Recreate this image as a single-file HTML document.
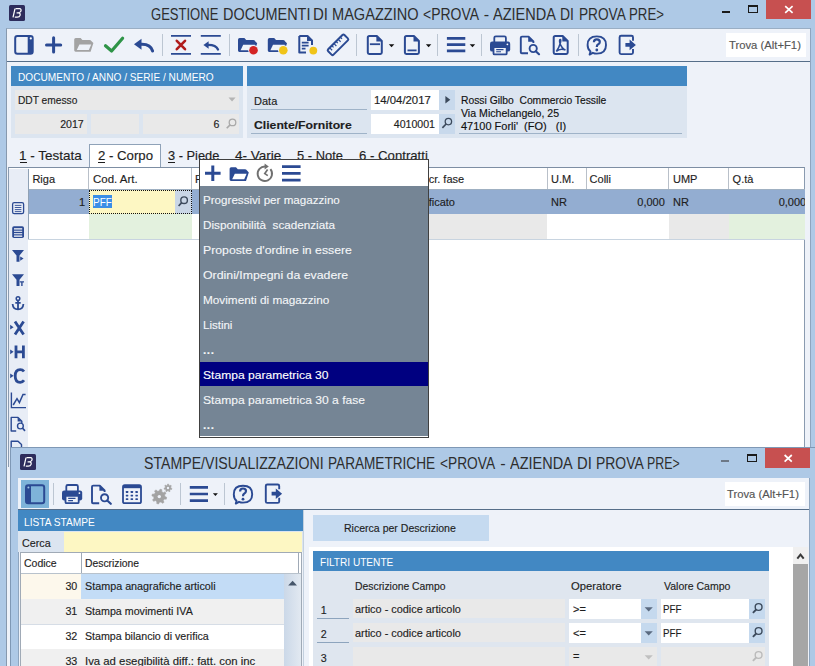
<!DOCTYPE html>
<html><head><meta charset="utf-8">
<style>
*{margin:0;padding:0;box-sizing:border-box}
html,body{width:815px;height:666px;overflow:hidden}
body{position:relative;background:#aec9e6;font-family:"Liberation Sans",sans-serif;font-size:11px;color:#1e1e1e}
.a{position:absolute}
.t{position:absolute;white-space:pre;line-height:1;-webkit-text-stroke:0.15px currentColor}
.s{position:absolute;overflow:visible}
</style></head><body>
<div class="a" style="left:9px;top:5px;width:16px;height:15.6px;background:#2d2c5c;border-radius:1.5px"></div>
<svg class="s" style="left:0px;top:0px" width="815" height="666" viewBox="0 0 815 666"><path d="M13 17.4 L15 8.6 M15.6 8.6 H19.6 Q21.4 8.8 21 10.8 Q20.5 12.8 16.6 12.9 H18.6 Q20.6 13.2 20.1 15.2 Q19.5 17.2 17.2 17.2 H14.8" fill="none" stroke="#fff" stroke-width="1.25"/></svg>
<div class="t" style="left:150.70px;top:5.99px;font-size:16.2px;transform:scaleX(0.8050);transform-origin:0 0;color:#2d2d2d;-webkit-text-stroke:0">GESTIONE</div>
<div class="t" style="left:222.90px;top:5.99px;font-size:16.2px;transform:scaleX(0.8921);transform-origin:0 0;color:#2d2d2d;-webkit-text-stroke:0">DOCUMENTI</div>
<div class="t" style="left:313.10px;top:5.99px;font-size:16.2px;transform:scaleX(0.9267);transform-origin:0 0;color:#2d2d2d;-webkit-text-stroke:0">DI</div>
<div class="t" style="left:331.80px;top:5.99px;font-size:16.2px;transform:scaleX(0.8995);transform-origin:0 0;color:#2d2d2d;-webkit-text-stroke:0">MAGAZZINO</div>
<div class="t" style="left:423.10px;top:5.99px;font-size:16.2px;transform:scaleX(0.8626);transform-origin:0 0;color:#2d2d2d;-webkit-text-stroke:0">&lt;PROVA</div>
<div class="t" style="left:483.80px;top:5.99px;font-size:16.2px;color:#2d2d2d;-webkit-text-stroke:0">-</div>
<div class="t" style="left:492.70px;top:5.99px;font-size:16.2px;transform:scaleX(0.8973);transform-origin:0 0;color:#2d2d2d;-webkit-text-stroke:0">AZIENDA</div>
<div class="t" style="left:560.40px;top:5.99px;font-size:16.2px;transform:scaleX(0.8596);transform-origin:0 0;color:#2d2d2d;-webkit-text-stroke:0">DI</div>
<div class="t" style="left:578.50px;top:5.99px;font-size:16.2px;transform:scaleX(0.8434);transform-origin:0 0;color:#2d2d2d;-webkit-text-stroke:0">PROVA</div>
<div class="t" style="left:628.60px;top:5.99px;font-size:16.2px;transform:scaleX(0.8178);transform-origin:0 0;color:#2d2d2d;-webkit-text-stroke:0">PRE&gt;</div>
<div class="a" style="left:722px;top:10.5px;width:8px;height:2.5px;background:#1a1a1a;"></div>
<div class="a" style="left:748px;top:5px;width:10px;height:8px;background:transparent;border:1.2px solid #1a1a1a;border-top-width:2px"></div>
<div class="a" style="left:766px;top:0px;width:45px;height:19px;background:#c75050;"></div>
<svg class="s" style="left:0px;top:0px" width="815" height="666" viewBox="0 0 815 666"><path d="M785.2 6.2 L792.6 12.9 M792.6 6.2 L785.2 12.9" stroke="#fff" stroke-width="1.7"/></svg>
<div class="a" style="left:6px;top:28px;width:804px;height:640px;background:#eef2f9;border-left:1px solid #8799ae;border-top:1px solid #9aaec4"></div>
<div class="a" style="left:7px;top:29px;width:803px;height:33px;background:#eef2f9;border-bottom:1px solid #566e89"></div>
<div class="a" style="left:810px;top:28px;width:1px;height:640px;background:#8ea5bf;"></div>
<div class="a" style="left:726px;top:33px;width:80px;height:24px;background:#fff;"></div>
<div class="t" style="left:729.00px;top:40.00px;font-size:11.1px;transform:scaleX(1.0156);transform-origin:0 0;color:#555">Trova (Alt+F1)</div>
<div class="a" style="left:162.0px;top:34px;width:1px;height:22px;background:#bcc6d2;"></div>
<div class="a" style="left:228.8px;top:34px;width:1px;height:22px;background:#bcc6d2;"></div>
<div class="a" style="left:356.0px;top:34px;width:1px;height:22px;background:#bcc6d2;"></div>
<div class="a" style="left:437.2px;top:34px;width:1px;height:22px;background:#bcc6d2;"></div>
<div class="a" style="left:480.7px;top:34px;width:1px;height:22px;background:#bcc6d2;"></div>
<div class="a" style="left:577.7px;top:34px;width:1px;height:22px;background:#bcc6d2;"></div>
<svg class="s" style="left:0px;top:0px" width="815" height="666" viewBox="0 0 815 666"><rect x="15.2" y="36" width="17.5" height="17.8" rx="2.2" fill="none" stroke="#2b4a93" stroke-width="2"/><rect x="27.7" y="36" width="5" height="17.8" fill="#2b4a93"/><circle cx="30.8" cy="38.4" r="1.1" fill="#fff"/><path d="M53.6 37.8 V52 M46.5 44.9 H60.7" stroke="#2b4a93" stroke-width="3" stroke-linecap="round"/><path d="M74.2 39.5 Q74.2 37.9 75.8 37.9 H80.60000000000001 L82.4 39.9 H89.4 Q90.80000000000001 39.9 91.6 41.3 L93.4 43.1 L90.6 51.7 H75.60000000000001 Q74.2 51.7 74.2 50.3 Z" fill="#a3a3a3"/><path d="M79.4 44.5 H91.2 L88.8 50.0 H76.8 Z" fill="#eef2f9"/><path d="M105.5 45.8 L111.6 51 L122.6 38.3" fill="none" stroke="#2e9447" stroke-width="3.2" stroke-linecap="round" stroke-linejoin="round"/><path d="M134 44.3 L141.5 38.8 L141.5 49.8 Z" fill="#2b4a93"/><path d="M140 44.3 Q150.5 43.5 152.6 51" fill="none" stroke="#2b4a93" stroke-width="3" stroke-linecap="round"/><path d="M171 35.8 H191 M171 53.9 H191" stroke="#2b4a93" stroke-width="1.7"/><path d="M176.8 40.8 L185 49.2 M185 40.8 L176.8 49.2" stroke="#b01c1c" stroke-width="2.6" stroke-linecap="round"/><path d="M200.8 35.8 H220.8 M200.8 53.9 H220.8" stroke="#2b4a93" stroke-width="1.7"/><path d="M203.4 45 L208.6 41.2 L208.6 48.8 Z" fill="#2b4a93"/><path d="M207 45 Q215.8 44.6 218 49.5" fill="none" stroke="#2b4a93" stroke-width="2.3" stroke-linecap="round"/><path d="M238 39.7 Q238 38.1 239.6 38.1 H244.4 L246.2 40.1 H253.2 Q254.6 40.1 255.4 41.5 L257.2 43.300000000000004 L254.4 51.900000000000006 H239.4 Q238 51.900000000000006 238 50.5 Z" fill="#2b4a93"/><path d="M243.2 44.7 H255 L252.6 50.2 H240.6 Z" fill="#eef2f9"/><circle cx="253.5" cy="50.3" r="5.2" fill="#eef2f9"/><circle cx="253.5" cy="50.3" r="4.3" fill="#d42424"/><path d="M267.8 39.7 Q267.8 38.1 269.40000000000003 38.1 H274.2 L276.0 40.1 H283.0 Q284.40000000000003 40.1 285.2 41.5 L287.0 43.300000000000004 L284.2 51.900000000000006 H269.2 Q267.8 51.900000000000006 267.8 50.5 Z" fill="#2b4a93"/><path d="M273.0 44.7 H284.8 L282.40000000000003 50.2 H270.40000000000003 Z" fill="#eef2f9"/><circle cx="283.3" cy="50.3" r="5.2" fill="#eef2f9"/><circle cx="283.3" cy="50.3" r="4.3" fill="#f0c419"/><path d="M299.3 36 H307.5 L312 40.5 V45 M299.3 36 V52.6 H306" fill="none" stroke="#2b4a93" stroke-width="2" stroke-linejoin="round"/><path d="M307 36 V41 H312 Z" fill="#2b4a93"/><path d="M301.8 42.6 H308.6 M301.8 45.6 H308.6 M301.8 48.6 H305.5" stroke="#2b4a93" stroke-width="1.6"/><circle cx="313.3" cy="50.6" r="4.8" fill="#eef2f9"/><circle cx="313.3" cy="50.6" r="3.9" fill="#f0c419"/><g transform="rotate(-45 338 44.8)"><rect x="326.5" y="41" width="23" height="7.6" rx="1.4" fill="none" stroke="#2b4a93" stroke-width="2"/><path d="M330 41.5 V44.5 M333 41.5 V43.5 M336 41.5 V44.5 M339 41.5 V43.5 M342 41.5 V44.5 M345 41.5 V43.5" stroke="#2b4a93" stroke-width="1.2"/></g><path d="M369.40000000000003 36 H376.8 L381.8 41 V52.6 Q381.8 54 380.40000000000003 54 H369.2 Q367.8 54 367.8 52.6 V37.6 Q367.8 36 369.40000000000003 36 Z" fill="none" stroke="#2b4a93" stroke-width="2" stroke-linejoin="round"/><path d="M376.40000000000003 36 V41.4 H381.8 Z" fill="#2b4a93"/><path d="M369.9 44.2 H380" stroke="#2b4a93" stroke-width="1.8"/><path d="M388.8 44.2 H394.3 L391.55 47.2 Z" fill="#111"/><path d="M406.5 36 H413.9 L418.9 41 V52.6 Q418.9 54 417.5 54 H406.29999999999995 Q404.9 54 404.9 52.6 V37.6 Q404.9 36 406.5 36 Z" fill="none" stroke="#2b4a93" stroke-width="2" stroke-linejoin="round"/><path d="M413.5 36 V41.4 H418.9 Z" fill="#2b4a93"/><path d="M407.5 50.4 H416.6" stroke="#2b4a93" stroke-width="1.8"/><path d="M425.9 44.2 H431.3 L428.6 47.2 Z" fill="#111"/><path d="M446.9 38.4 H465.3 M446.9 44.7 H465.3 M446.9 50.8 H465.3" stroke="#2b4a93" stroke-width="2.7"/><path d="M469.7 44.2 H475.2 L472.45 47.2 Z" fill="#111"/><rect x="494.3" y="36.3" width="11.6" height="7" rx="1.5" fill="none" stroke="#2b4a93" stroke-width="1.8"/><rect x="490" y="41.6" width="20.2" height="10" rx="2.2" fill="#2b4a93"/><rect x="493.5" y="47" width="13.2" height="7.4" rx="1" fill="#eef2f9" stroke="#2b4a93" stroke-width="1.8"/><path d="M496.2 49.6 H503.5 M496.2 51.8 H501" stroke="#2b4a93" stroke-width="1.1"/><circle cx="507.4" cy="44.3" r="0.9" fill="#fff"/><path d="M528 53.2 H521.8 Q520.8 53.2 520.8 52.2 V37.8 Q520.8 36.6 522 36.6 H528.6 L533.4 41.4 V43" fill="none" stroke="#2b4a93" stroke-width="1.9" stroke-linejoin="round"/><path d="M528.2 36.6 V41.8 H533.4 Z" fill="#2b4a93"/><circle cx="533.2" cy="48.5" r="3.6" fill="none" stroke="#2b4a93" stroke-width="1.9"/><path d="M535.8 51.2 L539 54.2" stroke="#2b4a93" stroke-width="2.2" stroke-linecap="round"/><path d="M555.3000000000001 36 H562.7 L567.7 41 V52.6 Q567.7 54 566.3000000000001 54 H555.1 Q553.7 54 553.7 52.6 V37.6 Q553.7 36 555.3000000000001 36 Z" fill="none" stroke="#2b4a93" stroke-width="2" stroke-linejoin="round"/><path d="M562.3000000000001 36 V41.4 H567.7 Z" fill="#2b4a93"/><path d="M556.3 51.5 Q558.8 48.5 560.5 42.5 Q561.2 39.5 560.2 39.6 Q559 39.8 560 43.5 Q561.8 48.5 565.5 50 M556.3 51.5 Q560 47.8 565.5 50" fill="none" stroke="#2b4a93" stroke-width="1.5" stroke-linejoin="round"/><path d="M590.5 51.6 Q587.6 49.2 587.6 45 Q587.6 36.4 596.8 36.4 Q606 36.4 606 45 Q606 53.6 596.8 53.6 Q594.6 53.6 592.8 52.8 L589.6 54.6 Z" fill="none" stroke="#2b4a93" stroke-width="1.9" stroke-linejoin="round"/><path d="M593.9 42.2 Q593.9 39.3 596.8 39.3 Q599.8 39.3 599.8 41.9 Q599.8 43.6 597.9 44.5 Q596.8 45 596.8 47" fill="none" stroke="#2b4a93" stroke-width="2.2"/><circle cx="596.8" cy="50" r="1.4" fill="#2b4a93"/><path d="M633 40.8 V37.2 Q633 35.7 631.5 35.7 H621.1 Q619.6 35.7 619.6 37.2 V52.6 Q619.6 54.1 621.1 54.1 H631.5 Q633 54.1 633 52.6 V49" fill="none" stroke="#2b4a93" stroke-width="1.9" stroke-linejoin="round"/><path d="M625.4 43 H629.6 V39.6 L635.9 44.9 L629.6 50.2 V46.8 H625.4 Z" fill="#2b4a93"/></svg>
<div class="a" style="left:11px;top:66px;width:232px;height:72px;background:#dce5f0;"></div>
<div class="a" style="left:11px;top:66px;width:232px;height:20px;background:#4288c3;"></div>
<div class="t" style="left:17.50px;top:72.46px;font-size:10.8px;transform:scaleX(0.9379);transform-origin:0 0;color:#fff;-webkit-text-stroke:0">DOCUMENTO / ANNO / SERIE / NUMERO</div>
<div class="a" style="left:15px;top:90px;width:224px;height:20px;background:#e9e9e9;"></div>
<div class="t" style="left:17.50px;top:95.16px;font-size:10.8px;transform:scaleX(0.9443);transform-origin:0 0;">DDT emesso</div>
<svg class="s" style="left:0px;top:0px" width="815" height="666" viewBox="0 0 815 666"><path d="M228.5 97.6 H235.6 L232.05 101.4 Z" fill="#b4b4b4"/></svg>
<div class="a" style="left:15px;top:114px;width:72px;height:20px;background:#e9e9e9;"></div>
<div class="t" style="right:731.30px;top:118.83px;font-size:10.6px;">2017</div>
<div class="a" style="left:91px;top:114px;width:48px;height:20px;background:#e9e9e9;"></div>
<div class="a" style="left:143px;top:114px;width:96px;height:20px;background:#e9e9e9;"></div>
<div class="t" style="right:595.50px;top:118.83px;font-size:10.6px;">6</div>
<svg class="s" style="left:0px;top:0px" width="815" height="666" viewBox="0 0 815 666"><circle cx="232.5" cy="122.4" r="3.3" fill="none" stroke="#a9a9a9" stroke-width="1.3"/><path d="M230.1 124.9 L226.7 128.3" stroke="#a9a9a9" stroke-width="1.6"/></svg>
<div class="a" style="left:247px;top:66px;width:440px;height:72px;background:#dce5f0;"></div>
<div class="a" style="left:247px;top:66px;width:440px;height:20px;background:#4288c3;"></div>
<div class="t" style="left:253.50px;top:95.89px;font-size:11px;transform:scaleX(1.0013);transform-origin:0 0;">Data</div>
<div class="a" style="left:251px;top:109px;width:116px;height:1px;background:#9fb3c8;"></div>
<div class="t" style="left:254.00px;top:119.85px;font-size:11.4px;transform:scaleX(1.0717);transform-origin:0 0;font-weight:bold">Cliente/Fornitore</div>
<div class="a" style="left:251px;top:132.5px;width:116px;height:1px;background:#9fb3c8;"></div>
<div class="a" style="left:371px;top:90px;width:68px;height:20px;background:#fff;"></div>
<div class="t" style="left:374.40px;top:95.39px;font-size:11px;transform:scaleX(1.0317);transform-origin:0 0;">14/04/2017</div>
<div class="a" style="left:439px;top:90px;width:16px;height:20px;background:#c8d9ec;"></div>
<svg class="s" style="left:0px;top:0px" width="815" height="666" viewBox="0 0 815 666"><path d="M445.4 95.9 V103.5 L450.3 99.7 Z" fill="#3c4a5c"/></svg>
<div class="a" style="left:371px;top:114px;width:68px;height:20px;background:#fff;"></div>
<div class="t" style="right:380.00px;top:119.23px;font-size:10.6px;">4010001</div>
<div class="a" style="left:439px;top:114px;width:16px;height:20px;background:#c8d9ec;"></div>
<svg class="s" style="left:0px;top:0px" width="815" height="666" viewBox="0 0 815 666"><circle cx="448.4" cy="121.6" r="3.2" fill="none" stroke="#3c4a5c" stroke-width="1.3"/><path d="M446.1 124 L442.4 127.8" stroke="#3c4a5c" stroke-width="1.7"/></svg>
<div class="t" style="left:461.20px;top:94.89px;font-size:11px;transform:scaleX(0.9371);transform-origin:0 0;color:#111">Rossi Gilbo  Commercio Tessile</div>
<div class="t" style="left:461.20px;top:107.89px;font-size:11px;transform:scaleX(0.9630);transform-origin:0 0;color:#111">Via Michelangelo, 25</div>
<div class="t" style="left:461.20px;top:121.39px;font-size:11px;transform:scaleX(0.9978);transform-origin:0 0;color:#111">47100 Forli&#x27;  (FO)   (I)</div>
<div class="a" style="left:459px;top:133px;width:223px;height:1px;background:#9fb3c8;"></div>
<div class="a" style="left:89px;top:144px;width:72px;height:25px;background:#fff;border:1px solid #8fa2b8;border-bottom:none"></div>
<div class="t" style="left:19.40px;top:150.43px;font-size:12.6px;transform:scaleX(1.0700);transform-origin:0 0;">1 - Testata</div>
<div class="a" style="left:19.6px;top:162px;width:7px;height:1px;background:#1e1e1e;"></div>
<div class="t" style="left:97.70px;top:150.23px;font-size:12.6px;transform:scaleX(1.0487);transform-origin:0 0;">2 - Corpo</div>
<div class="a" style="left:97.9px;top:162px;width:7px;height:1px;background:#1e1e1e;"></div>
<div class="t" style="left:167.70px;top:150.23px;font-size:12.6px;transform:scaleX(1.0183);transform-origin:0 0;">3 - Piede</div>
<div class="a" style="left:168px;top:162px;width:7px;height:1px;background:#1e1e1e;"></div>
<div class="t" style="left:235.40px;top:150.23px;font-size:12.6px;transform:scaleX(1.0744);transform-origin:0 0;">4- Varie</div>
<div class="t" style="left:297.20px;top:150.23px;font-size:12.6px;transform:scaleX(1.0250);transform-origin:0 0;">5 - Note</div>
<div class="t" style="left:359.00px;top:150.23px;font-size:12.6px;transform:scaleX(1.0465);transform-origin:0 0;">6 - Contratti</div>
<div class="a" style="left:8px;top:167px;width:797px;height:300px;background:#fff;border-top:1px solid #7d8ea3;border-left:1px solid #8a9bb0;border-right:1px solid #8a9bb0"></div>
<div class="a" style="left:9px;top:169px;width:19px;height:300px;background:#e8edf6;"></div>
<div class="a" style="left:28px;top:169px;width:1px;height:70px;background:#a9b6c4;"></div>
<div class="a" style="left:88px;top:168px;width:1px;height:21px;background:#b9c0c9;"></div>
<div class="a" style="left:191px;top:168px;width:1px;height:21px;background:#b9c0c9;"></div>
<div class="a" style="left:547px;top:168px;width:1px;height:21px;background:#b9c0c9;"></div>
<div class="a" style="left:586px;top:168px;width:1px;height:21px;background:#b9c0c9;"></div>
<div class="a" style="left:668px;top:168px;width:1px;height:21px;background:#b9c0c9;"></div>
<div class="a" style="left:728px;top:168px;width:1px;height:21px;background:#b9c0c9;"></div>
<div class="a" style="left:28px;top:189px;width:777px;height:1px;background:#9fb0c2;"></div>
<div class="t" style="left:32.40px;top:174.39px;font-size:11px;">Riga</div>
<div class="t" style="left:92.60px;top:174.39px;font-size:11px;transform:scaleX(1.0425);transform-origin:0 0;">Cod. Art.</div>
<div class="t" style="left:195.00px;top:174.39px;font-size:11px;">F</div>
<div class="t" style="left:428.70px;top:174.39px;font-size:11px;">cr. fase</div>
<div class="t" style="left:551.00px;top:174.39px;font-size:11px;">U.M.</div>
<div class="t" style="left:589.60px;top:174.39px;font-size:11px;">Colli</div>
<div class="t" style="left:673.00px;top:174.39px;font-size:11px;">UMP</div>
<div class="t" style="left:732.60px;top:174.39px;font-size:11px;">Q.tà</div>
<div class="a" style="left:28px;top:190px;width:777px;height:24px;background:#93add1;"></div>
<div class="a" style="left:89px;top:190px;width:86px;height:24px;background:#fdf7c3;"></div>
<div class="a" style="left:175px;top:190px;width:16.5px;height:24px;background:#c9d6e6;"></div>
<div class="a" style="left:89px;top:189.8px;width:102.5px;height:24.2px;background:transparent;border:1px dotted #111"></div>
<div class="a" style="left:93px;top:194.8px;width:19px;height:13px;background:#3a8ee6;"></div>
<div class="t" style="right:730.00px;top:196.69px;font-size:11px;">1</div>
<div class="t" style="left:93.30px;top:197.53px;font-size:10px;transform:scaleX(0.9950);transform-origin:0 0;color:#fff;-webkit-text-stroke:0">PFF</div>
<svg class="s" style="left:0px;top:0px" width="815" height="666" viewBox="0 0 815 666"><circle cx="184.1" cy="200.2" r="3.3" fill="none" stroke="#3c4a5c" stroke-width="1.4"/><path d="M181.7 202.7 L178.6 206" stroke="#3c4a5c" stroke-width="1.7"/></svg>
<div class="t" style="left:428.70px;top:196.69px;font-size:11px;">ficato</div>
<div class="t" style="left:551.00px;top:196.69px;font-size:11px;">NR</div>
<div class="t" style="right:150.20px;top:196.69px;font-size:11px;">0,000</div>
<div class="t" style="left:673.00px;top:196.69px;font-size:11px;">NR</div>
<div class="a" style="left:729px;top:190px;width:76px;height:24px;overflow:hidden">
<div class="t" style="left:49.70px;top:6.69px;font-size:11px;">0,000</div>
</div>
<div class="a" style="left:89px;top:214px;width:102.5px;height:24.5px;background:#e3f1de;"></div>
<div class="a" style="left:200px;top:214px;width:347px;height:24.5px;background:#e9e9e9;"></div>
<div class="a" style="left:669px;top:214px;width:60px;height:24.5px;background:#e9e9e9;"></div>
<div class="a" style="left:729px;top:214px;width:76px;height:24.5px;background:#e3f1de;"></div>
<div class="a" style="left:28px;top:238.5px;width:777px;height:1px;background:#c8d4e0;"></div>
<div class="a" style="left:28px;top:169px;width:1px;height:70px;background:#8fa1b5;"></div>
<svg class="s" style="left:0px;top:0px" width="815" height="666" viewBox="0 0 815 666"><rect x="12.6" y="202.6" width="11" height="11" rx="1.6" fill="none" stroke="#2b4a93" stroke-width="1.3"/><path d="M14.8 205.4 H21.4 M14.8 207.5 H21.4 M14.8 209.6 H21.4 M14.8 211.6 H21.4" stroke="#2b4a93" stroke-width="0.9"/><rect x="12.2" y="226.2" width="11.8" height="11.8" rx="1.8" fill="#2b4a93"/><path d="M14 228.9 H22.2 M14 231.3 H22.2 M14 233.7 H22.2 M14 236.1 H22.2" stroke="#fff" stroke-width="1.1"/><path d="M12 250 H24 L19.5 255.5 V261.8 H16.5 V255.5 Z" fill="#2b4a93"/><path d="M20.2 256.5 L23.6 258.6 L20.2 260.7 Z" fill="#2b4a93"/><path d="M12 274.3 H24 L19.5 279.8 V286 H16.5 V279.8 Z" fill="#2b4a93"/><path d="M19.8 281.2 H24 V282.6 H22.6 V286 H21.2 V282.6 H19.8 Z" fill="#2b4a93"/><circle cx="18" cy="298.6" r="1.8" fill="none" stroke="#2b4a93" stroke-width="1.5"/><path d="M18 300.4 V309 M15.3 302.8 H20.7 M12.6 304 Q13 309.4 18 309.4 Q23 309.4 23.4 304" fill="none" stroke="#2b4a93" stroke-width="1.8"/><path d="M10.2 324.8 L13.6 327.2 L10.2 329.6 Z" fill="#2b4a93"/><path d="M15 321.5 L23.6 334.5 M23.6 321.5 L15 334.5" stroke="#2b4a93" stroke-width="2.8"/><path d="M10.2 349.4 L13.6 351.8 L10.2 354.2 Z" fill="#2b4a93"/><path d="M16 345.6 V358.3 M23.4 345.6 V358.3 M16 351.8 H23.4" stroke="#2b4a93" stroke-width="2.8"/><path d="M10.2 373.4 L13.6 375.8 L10.2 378.2 Z" fill="#2b4a93"/><path d="M24 371.5 Q22.6 369.6 20.2 369.6 Q15.2 369.6 15.2 375.9 Q15.2 382.3 20.2 382.3 Q22.6 382.3 24 380.3" fill="none" stroke="#2b4a93" stroke-width="2.8"/><path d="M11.4 392.4 V407.6 H26" fill="none" stroke="#2b4a93" stroke-width="1.4"/><path d="M13.2 405 L17 398.6 L19.4 402.6 L23 394.4 H25.6" fill="none" stroke="#2b4a93" stroke-width="1.5"/><path d="M16.2 431 H11.2 V417.4 H18 L21.8 421.2 V423" fill="none" stroke="#2b4a93" stroke-width="1.4" stroke-linejoin="round"/><path d="M17.6 417.4 V421.6 H21.8 Z" fill="#2b4a93"/><circle cx="20.4" cy="426" r="2.9" fill="none" stroke="#2b4a93" stroke-width="1.4"/><path d="M22.4 428 L25 430.8" stroke="#2b4a93" stroke-width="1.7"/><path d="M11.2 447 V441.2 H18 L21.5 444.6 V447" fill="none" stroke="#2b4a93" stroke-width="1.4" stroke-linejoin="round"/></svg>
<div class="a" style="left:199px;top:159px;width:230px;height:279px;background:#758595;border:1px solid #404040"></div>
<div class="a" style="left:200px;top:160px;width:228px;height:26.3px;background:#fff;"></div>
<svg class="s" style="left:0px;top:0px" width="815" height="666" viewBox="0 0 815 666"><path d="M212.8 165.6 V181 M205 173.3 H220.6" stroke="#2b4a93" stroke-width="3"/><path d="M229.6 168.79999999999998 Q229.6 167.2 231.2 167.2 H236.0 L237.79999999999998 169.2 H244.79999999999998 Q246.2 169.2 247.0 170.6 L248.79999999999998 172.39999999999998 L246.0 181.0 H231.0 Q229.6 181.0 229.6 179.6 Z" fill="#2b4a93"/><path d="M234.79999999999998 173.79999999999998 H246.6 L244.2 179.29999999999998 H232.2 Z" fill="#fff"/><path d="M270.4 169.2 A7.2 7.2 0 1 1 265.4 166.6" fill="none" stroke="#707070" stroke-width="1.9"/><path d="M264.6 163.6 L268.8 166.5 L264.6 169.4 Z" fill="#707070"/><path d="M267.6 169.6 L264.8 173.6 L267.8 175.6" fill="none" stroke="#707070" stroke-width="1.7"/><path d="M282 166.6 H300.6 M282 173.4 H300.6 M282 180.2 H300.6" stroke="#2b4a93" stroke-width="2.8"/></svg>
<div class="a" style="left:200px;top:362px;width:228px;height:23.7px;background:#000080;"></div>
<div class="a" style="left:200px;top:436px;width:228px;height:1.2px;background:#fff;"></div>
<div class="t" style="left:202.90px;top:195.01px;font-size:11.8px;transform:scaleX(0.9844);transform-origin:0 0;color:#f4f6f8;-webkit-text-stroke:0.12px #f4f6f8">Progressivi per magazzino</div>
<div class="t" style="left:202.90px;top:220.01px;font-size:11.8px;transform:scaleX(0.9911);transform-origin:0 0;color:#f4f6f8;-webkit-text-stroke:0.12px #f4f6f8">Disponibilità  scadenziata</div>
<div class="t" style="left:202.90px;top:245.01px;font-size:11.8px;transform:scaleX(1.0393);transform-origin:0 0;color:#f4f6f8;-webkit-text-stroke:0.12px #f4f6f8">Proposte d&#x27;ordine in essere</div>
<div class="t" style="left:202.90px;top:270.01px;font-size:11.8px;transform:scaleX(1.0443);transform-origin:0 0;color:#f4f6f8;-webkit-text-stroke:0.12px #f4f6f8">Ordini/Impegni da evadere</div>
<div class="t" style="left:202.90px;top:295.01px;font-size:11.8px;transform:scaleX(0.9984);transform-origin:0 0;color:#f4f6f8;-webkit-text-stroke:0.12px #f4f6f8">Movimenti di magazzino</div>
<div class="t" style="left:202.90px;top:320.01px;font-size:11.8px;transform:scaleX(0.9751);transform-origin:0 0;color:#f4f6f8;-webkit-text-stroke:0.12px #f4f6f8">Listini</div>
<div class="t" style="left:202.90px;top:345.01px;font-size:11.8px;transform:scaleX(1.0000);transform-origin:0 0;color:#f4f6f8;-webkit-text-stroke:0.12px #f4f6f8;font-weight:bold;letter-spacing:0.6px">...</div>
<div class="t" style="left:202.90px;top:370.01px;font-size:11.8px;transform:scaleX(1.0240);transform-origin:0 0;color:#ffffff;-webkit-text-stroke:0.12px #ffffff">Stampa parametrica 30</div>
<div class="t" style="left:202.90px;top:395.01px;font-size:11.8px;transform:scaleX(1.0255);transform-origin:0 0;color:#f4f6f8;-webkit-text-stroke:0.12px #f4f6f8">Stampa parametrica 30 a fase</div>
<div class="t" style="left:202.90px;top:420.01px;font-size:11.8px;transform:scaleX(1.0000);transform-origin:0 0;color:#f4f6f8;-webkit-text-stroke:0.12px #f4f6f8;font-weight:bold;letter-spacing:0.6px">...</div>
<div class="a" style="left:10px;top:447px;width:805px;height:219px;background:#aec9e6;border-left:1px solid #7f98b5;border-top:1px solid #7f98b5"></div>
<div class="a" style="left:20px;top:454px;width:16px;height:15.6px;background:#2d2c5c;border-radius:1.5px"></div>
<svg class="s" style="left:0px;top:0px" width="815" height="666" viewBox="0 0 815 666"><path d="M24 466.4 L26 457.6 M26.6 457.6 H30.6 Q32.4 457.8 32 459.8 Q31.5 461.8 27.6 461.9 H29.6 Q31.6 462.2 31.1 464.2 Q30.5 466.2 28.2 466.2 H25.8" fill="none" stroke="#fff" stroke-width="1.25"/></svg>
<div class="t" style="left:144.30px;top:454.79px;font-size:16.2px;transform:scaleX(0.8734);transform-origin:0 0;color:#2d2d2d;-webkit-text-stroke:0">STAMPE/VISUALIZZAZIONI</div>
<div class="t" style="left:327.70px;top:454.79px;font-size:16.2px;transform:scaleX(0.8404);transform-origin:0 0;color:#2d2d2d;-webkit-text-stroke:0">PARAMETRICHE</div>
<div class="t" style="left:440.40px;top:454.79px;font-size:16.2px;transform:scaleX(0.8485);transform-origin:0 0;color:#2d2d2d;-webkit-text-stroke:0">&lt;PROVA</div>
<div class="t" style="left:500.30px;top:454.79px;font-size:16.2px;color:#2d2d2d;-webkit-text-stroke:0">-</div>
<div class="t" style="left:509.70px;top:454.79px;font-size:16.2px;transform:scaleX(0.8944);transform-origin:0 0;color:#2d2d2d;-webkit-text-stroke:0">AZIENDA</div>
<div class="t" style="left:577.10px;top:454.79px;font-size:16.2px;transform:scaleX(0.9133);transform-origin:0 0;color:#2d2d2d;-webkit-text-stroke:0">DI</div>
<div class="t" style="left:595.70px;top:454.79px;font-size:16.2px;transform:scaleX(0.8600);transform-origin:0 0;color:#2d2d2d;-webkit-text-stroke:0">PROVA</div>
<div class="t" style="left:647.40px;top:454.79px;font-size:16.2px;transform:scaleX(0.7647);transform-origin:0 0;color:#2d2d2d;-webkit-text-stroke:0">PRE&gt;</div>
<div class="a" style="left:721px;top:459.8px;width:8px;height:2.2px;background:#6d7886;"></div>
<div class="a" style="left:747px;top:453.8px;width:10px;height:8px;background:transparent;border:1.2px solid #1a1a1a;border-top-width:2px"></div>
<div class="a" style="left:765px;top:448px;width:45px;height:20px;background:#c75050;"></div>
<svg class="s" style="left:0px;top:0px" width="815" height="666" viewBox="0 0 815 666"><path d="M784.6 455 L791.8 461.6 M791.8 455 L784.6 461.6" stroke="#fff" stroke-width="1.7"/></svg>
<div class="a" style="left:17.5px;top:477.5px;width:792.5px;height:190px;background:#eef2f9;border-top:1px solid #8ea5bf;border-left:1px solid #8ea5bf"></div>
<div class="a" style="left:18px;top:478px;width:792px;height:32px;background:#eef2f9;border-bottom:1px solid #566e89"></div>
<div class="a" style="left:725.3px;top:482.2px;width:80px;height:24px;background:#fff;"></div>
<div class="t" style="left:727.30px;top:488.80px;font-size:11.1px;transform:scaleX(1.0156);transform-origin:0 0;color:#555">Trova (Alt+F1)</div>
<div class="a" style="left:21px;top:480px;width:28px;height:28px;background:#7eb3d9;"></div>
<div class="a" style="left:52.8px;top:483px;width:1px;height:22px;background:#bcc6d2;"></div>
<div class="a" style="left:180.0px;top:483px;width:1px;height:22px;background:#bcc6d2;"></div>
<div class="a" style="left:224.2px;top:483px;width:1px;height:22px;background:#bcc6d2;"></div>
<svg class="s" style="left:0px;top:0px" width="815" height="666" viewBox="0 0 815 666"><rect x="26" y="485.2" width="18.2" height="18" rx="2.2" fill="none" stroke="#2b4a93" stroke-width="2"/><rect x="26" y="485.2" width="5" height="18" fill="#2b4a93"/><circle cx="28.4" cy="487.6" r="1" fill="#9fc6e6"/><rect x="66.3" y="485" width="11.6" height="7" rx="1.5" fill="none" stroke="#2b4a93" stroke-width="1.8"/><rect x="62" y="490.4" width="20.2" height="10" rx="2.2" fill="#2b4a93"/><rect x="65.5" y="495.8" width="13.2" height="7.4" rx="1" fill="#eef2f9" stroke="#2b4a93" stroke-width="1.8"/><path d="M68.2 498.4 H75.5 M68.2 500.6 H73" stroke="#2b4a93" stroke-width="1.1"/><circle cx="79.4" cy="493.1" r="0.9" fill="#fff"/><path d="M99.2 503.2 H93 Q92 503.2 92 502.2 V486.8 Q92 485.6 93.2 485.6 H99.8 L104.6 490.4 V492" fill="none" stroke="#2b4a93" stroke-width="1.9" stroke-linejoin="round"/><path d="M99.4 485.6 V490.8 H104.6 Z" fill="#2b4a93"/><circle cx="104.6" cy="497.8" r="3.6" fill="none" stroke="#2b4a93" stroke-width="1.9"/><path d="M107.2 500.5 L110.8 503.8" stroke="#2b4a93" stroke-width="2.2" stroke-linecap="round"/><rect x="123" y="485.2" width="18" height="18" rx="1.8" fill="none" stroke="#2b4a93" stroke-width="1.8"/><rect x="123" y="485.2" width="18" height="3" fill="#2b4a93"/><rect x="125.8" y="491.1" width="2.5" height="1.8" rx="0.4" fill="#2b4a93"/><rect x="130.6" y="491.1" width="2.5" height="1.8" rx="0.4" fill="#2b4a93"/><rect x="135.4" y="491.1" width="2.5" height="1.8" rx="0.4" fill="#2b4a93"/><rect x="125.8" y="494.7" width="2.5" height="1.8" rx="0.4" fill="#2b4a93"/><rect x="130.6" y="494.7" width="2.5" height="1.8" rx="0.4" fill="#2b4a93"/><rect x="135.4" y="494.7" width="2.5" height="1.8" rx="0.4" fill="#2b4a93"/><rect x="125.8" y="498.3" width="2.5" height="1.8" rx="0.4" fill="#2b4a93"/><rect x="130.6" y="498.3" width="2.5" height="1.8" rx="0.4" fill="#2b4a93"/><rect x="135.4" y="498.3" width="2.5" height="1.8" rx="0.4" fill="#2b4a93"/><path d="M164.90 496.60 L166.67 497.30 L166.24 499.16 L164.35 499.02 L163.26 500.56 L164.02 502.30 L162.40 503.32 L161.16 501.88 L159.30 502.20 L158.60 503.97 L156.74 503.54 L156.88 501.65 L155.34 500.56 L153.60 501.32 L152.58 499.70 L154.02 498.46 L153.70 496.60 L151.93 495.90 L152.36 494.04 L154.25 494.18 L155.34 492.64 L154.58 490.90 L156.20 489.88 L157.44 491.32 L159.30 491.00 L160.00 489.23 L161.86 489.66 L161.72 491.55 L163.26 492.64 L165.00 491.88 L166.02 493.50 L164.58 494.74 Z" fill="#a3a3a3" stroke="#a3a3a3" stroke-width="0.6" stroke-linejoin="round"/><circle cx="159.3" cy="496.6" r="1.7" fill="#eef2f9"/><path d="M170.80 488.00 L171.88 488.42 L171.59 489.53 L170.44 489.37 L169.75 490.19 L170.09 491.29 L169.04 491.76 L168.45 490.76 L167.38 490.73 L166.73 491.69 L165.71 491.16 L166.12 490.08 L165.48 489.21 L164.32 489.30 L164.10 488.17 L165.21 487.82 L165.48 486.79 L164.69 485.94 L165.43 485.06 L166.40 485.71 L167.38 485.27 L167.55 484.13 L168.70 484.16 L168.79 485.31 L169.75 485.81 L170.75 485.23 L171.43 486.15 L170.59 486.95 Z" fill="#a3a3a3" stroke="#a3a3a3" stroke-width="0.6" stroke-linejoin="round"/><circle cx="168" cy="488" r="1.2" fill="#eef2f9"/><path d="M189.8 487.4 H208 M189.8 494 H208 M189.8 500.6 H208" stroke="#2b4a93" stroke-width="2.7"/><path d="M212.9 493.3 H217.9 L215.4 496 Z" fill="#111"/><path d="M236.5 500.8 Q233.8 498.6 233.8 494.2 Q233.8 485.8 243 485.8 Q252.2 485.8 252.2 494.2 Q252.2 502.6 243 502.6 Q240.8 502.6 239 501.8 L235.8 503.6 Z" fill="none" stroke="#2b4a93" stroke-width="1.9" stroke-linejoin="round"/><path d="M240.1 491.4 Q240.1 488.5 243 488.5 Q246 488.5 246 491.1 Q246 492.8 244.1 493.7 Q243 494.2 243 496.2" fill="none" stroke="#2b4a93" stroke-width="2.2"/><circle cx="243" cy="499.2" r="1.4" fill="#2b4a93"/><path d="M279.2 489.2 V486 Q279.2 484.5 277.7 484.5 H267.3 Q265.8 484.5 265.8 486 V501.4 Q265.8 502.9 267.3 502.9 H277.7 Q279.2 502.9 279.2 501.4 V497.8" fill="none" stroke="#2b4a93" stroke-width="1.9" stroke-linejoin="round"/><path d="M271.6 491.8 H275.8 V488.4 L282.1 493.7 L275.8 499 V495.6 H271.6 Z" fill="#2b4a93"/></svg>
<div class="a" style="left:18px;top:510px;width:286px;height:21px;background:#4288c3;"></div>
<div class="t" style="left:24.20px;top:516.76px;font-size:10.8px;transform:scaleX(0.9430);transform-origin:0 0;color:#fff;-webkit-text-stroke:0">LISTA STAMPE</div>
<div class="a" style="left:18px;top:531px;width:286px;height:21px;background:#dce5f0;"></div>
<div class="t" style="left:22.20px;top:537.89px;font-size:11px;transform:scaleX(0.9767);transform-origin:0 0;">Cerca</div>
<div class="a" style="left:64px;top:532px;width:238px;height:19.5px;background:#fdf7c3;"></div>
<div class="a" style="left:20px;top:552px;width:282px;height:120px;background:#fff;"></div>
<div class="a" style="left:20px;top:552px;width:282px;height:22px;background:transparent;border:1px solid #a0aab6;border-bottom:none"></div>
<div class="a" style="left:80.5px;top:553px;width:1px;height:20.5px;background:#a0aab6;"></div>
<div class="a" style="left:297.5px;top:553px;width:1px;height:20.5px;background:#a0aab6;"></div>
<div class="a" style="left:21px;top:573.4px;width:280px;height:1px;background:#b8c2cc;"></div>
<div class="t" style="left:24.20px;top:557.79px;font-size:11px;transform:scaleX(0.9530);transform-origin:0 0;">Codice</div>
<div class="t" style="left:84.60px;top:557.79px;font-size:11px;transform:scaleX(0.9401);transform-origin:0 0;">Descrizione</div>
<div class="a" style="left:21px;top:574px;width:60px;height:24.5px;background:#fdf8ec;"></div>
<div class="a" style="left:81px;top:574px;width:203px;height:24.5px;background:#c3dcf6;"></div>
<div class="a" style="left:21px;top:598.5px;width:263px;height:0.8px;background:#d6dde6;"></div>
<div class="t" style="right:737.70px;top:580.94px;font-size:10.7px;">30</div>
<div class="t" style="left:84.50px;top:580.69px;font-size:11px;transform:scaleX(0.9795);transform-origin:0 0;">Stampa anagrafiche articoli</div>
<div class="a" style="left:21px;top:599px;width:263px;height:24.5px;background:#f0f0f0;"></div>
<div class="a" style="left:21px;top:623.5px;width:263px;height:0.8px;background:#d6dde6;"></div>
<div class="t" style="right:737.70px;top:605.94px;font-size:10.7px;">31</div>
<div class="t" style="left:84.50px;top:605.69px;font-size:11px;transform:scaleX(0.9702);transform-origin:0 0;">Stampa movimenti IVA</div>
<div class="a" style="left:21px;top:648.5px;width:263px;height:0.8px;background:#d6dde6;"></div>
<div class="t" style="right:737.70px;top:630.94px;font-size:10.7px;">32</div>
<div class="t" style="left:84.50px;top:630.69px;font-size:11px;transform:scaleX(0.9684);transform-origin:0 0;">Stampa bilancio di verifica</div>
<div class="a" style="left:21px;top:649px;width:263px;height:24.5px;background:#f0f0f0;"></div>
<div class="a" style="left:21px;top:673.5px;width:263px;height:0.8px;background:#d6dde6;"></div>
<div class="t" style="right:737.70px;top:655.94px;font-size:10.7px;">33</div>
<div class="t" style="left:84.50px;top:655.69px;font-size:11px;transform:scaleX(1.0322);transform-origin:0 0;">Iva ad esegibilità diff.: fatt. con inc</div>
<div class="a" style="left:284px;top:574px;width:17px;height:100px;background:linear-gradient(to right,#cbd8e8,#e2e9f1);"></div>
<div class="a" style="left:301px;top:552px;width:1px;height:120px;background:#a0aab6;"></div>
<div class="a" style="left:20px;top:573px;width:1px;height:100px;background:#a0aab6;"></div>
<svg class="s" style="left:0px;top:0px" width="815" height="666" viewBox="0 0 815 666"><path d="M288.2 585.6 L292.6 580.8 L297 585.6 Z" fill="#46566a"/></svg>
<div class="a" style="left:303px;top:510px;width:1px;height:160px;background:#c3d0de;"></div>
<div class="a" style="left:312.7px;top:515.3px;width:176.7px;height:25.3px;background:#c5daf0;"></div>
<div class="t" style="left:344.00px;top:523.39px;font-size:11px;transform:scaleX(0.9578);transform-origin:0 0;">Ricerca per Descrizione</div>
<div class="a" style="left:309.2px;top:547.2px;width:483.7px;height:125px;background:#fff;"></div>
<div class="a" style="left:312.7px;top:551px;width:456px;height:19.8px;background:#4288c3;"></div>
<div class="t" style="left:319.50px;top:557.46px;font-size:10.8px;transform:scaleX(0.9352);transform-origin:0 0;color:#fff;-webkit-text-stroke:0">FILTRI UTENTE</div>
<div class="a" style="left:312.7px;top:570.8px;width:456px;height:100px;background:#dfe6ef;"></div>
<div class="t" style="left:355.00px;top:581.09px;font-size:11px;transform:scaleX(0.9432);transform-origin:0 0;">Descrizione Campo</div>
<div class="t" style="left:571.30px;top:580.99px;font-size:11px;transform:scaleX(1.0216);transform-origin:0 0;">Operatore</div>
<div class="t" style="left:663.60px;top:581.09px;font-size:11px;transform:scaleX(0.9545);transform-origin:0 0;">Valore Campo</div>
<div class="t" style="left:320.80px;top:605.14px;font-size:10.7px;">1</div>
<div class="a" style="left:317px;top:618.4px;width:31.5px;height:1px;background:#8da4bd;"></div>
<div class="a" style="left:352.7px;top:599px;width:212px;height:19.4px;background:#e9e9e9;"></div>
<div class="t" style="left:355.00px;top:603.99px;font-size:11px;transform:scaleX(0.9894);transform-origin:0 0;">artico - codice articolo</div>
<div class="a" style="left:568.8px;top:599px;width:72px;height:20px;background:#fff;"></div>
<div class="a" style="left:640.7px;top:599px;width:16px;height:20px;background:#c5d9ee;"></div>
<div class="a" style="left:660.8px;top:599px;width:88.2px;height:19.5px;background:#fff;"></div>
<div class="a" style="left:749px;top:599px;width:16px;height:19.5px;background:#c5d9ee;"></div>
<svg class="s" style="left:0px;top:0px" width="815" height="666" viewBox="0 0 815 666"><path d="M644.6 607.2 H652.8 L648.7 611.4 Z" fill="#5a6a80"/><circle cx="758.6" cy="607" r="3.4" fill="none" stroke="#3c4a5c" stroke-width="1.4"/><path d="M756.2 609.5 L752.9 612.8" stroke="#3c4a5c" stroke-width="1.8"/></svg>
<div class="t" style="left:573.00px;top:603.79px;font-size:11px;">&gt;=</div>
<div class="t" style="left:663.20px;top:604.26px;font-size:10.8px;transform:scaleX(0.9006);transform-origin:0 0;">PFF</div>
<div class="t" style="left:320.80px;top:629.14px;font-size:10.7px;">2</div>
<div class="a" style="left:317px;top:642.4px;width:31.5px;height:1px;background:#8da4bd;"></div>
<div class="a" style="left:352.7px;top:623px;width:212px;height:19.4px;background:#e9e9e9;"></div>
<div class="t" style="left:355.00px;top:627.99px;font-size:11px;transform:scaleX(0.9894);transform-origin:0 0;">artico - codice articolo</div>
<div class="a" style="left:568.8px;top:623px;width:72px;height:20px;background:#fff;"></div>
<div class="a" style="left:640.7px;top:623px;width:16px;height:20px;background:#c5d9ee;"></div>
<div class="a" style="left:660.8px;top:623px;width:88.2px;height:19.5px;background:#fff;"></div>
<div class="a" style="left:749px;top:623px;width:16px;height:19.5px;background:#c5d9ee;"></div>
<svg class="s" style="left:0px;top:0px" width="815" height="666" viewBox="0 0 815 666"><path d="M644.6 631.2 H652.8 L648.7 635.4 Z" fill="#5a6a80"/><circle cx="758.6" cy="631" r="3.4" fill="none" stroke="#3c4a5c" stroke-width="1.4"/><path d="M756.2 633.5 L752.9 636.8" stroke="#3c4a5c" stroke-width="1.8"/></svg>
<div class="t" style="left:573.00px;top:627.79px;font-size:11px;">&lt;=</div>
<div class="t" style="left:663.20px;top:628.26px;font-size:10.8px;transform:scaleX(0.9006);transform-origin:0 0;">PFF</div>
<div class="t" style="left:320.80px;top:653.14px;font-size:10.7px;">3</div>
<div class="a" style="left:317px;top:666.4px;width:31.5px;height:1px;background:#8da4bd;"></div>
<div class="a" style="left:352.7px;top:647px;width:212px;height:19.4px;background:#e9e9e9;"></div>
<div class="a" style="left:568.8px;top:646.7px;width:88px;height:20px;background:#e9e9e9;"></div>
<div class="a" style="left:660.8px;top:647px;width:104.2px;height:20px;background:#e9e9e9;"></div>
<div class="t" style="left:573.00px;top:651.19px;font-size:11px;">=</div>
<svg class="s" style="left:0px;top:0px" width="815" height="666" viewBox="0 0 815 666"><path d="M644.6 655.2 H652.8 L648.7 659.4 Z" fill="#c0c0c0"/><circle cx="758.6" cy="655" r="3.4" fill="none" stroke="#bbb" stroke-width="1.4"/><path d="M756.2 657.5 L752.9 660.8" stroke="#bbb" stroke-width="1.8"/></svg>
<div class="a" style="left:792.9px;top:547px;width:15.2px;height:17px;background:#f0f0f0;"></div>
<div class="a" style="left:792.9px;top:564px;width:15.2px;height:110px;background:#a6a6a6;"></div>
<svg class="s" style="left:0px;top:0px" width="815" height="666" viewBox="0 0 815 666"><path d="M797.3 558.6 L800.5 554.6 L803.7 558.6" fill="none" stroke="#3a3a3a" stroke-width="2"/></svg>
<div class="a" style="left:808.5px;top:477.5px;width:1.2px;height:200px;background:#8ea5bf;"></div>
</body></html>
